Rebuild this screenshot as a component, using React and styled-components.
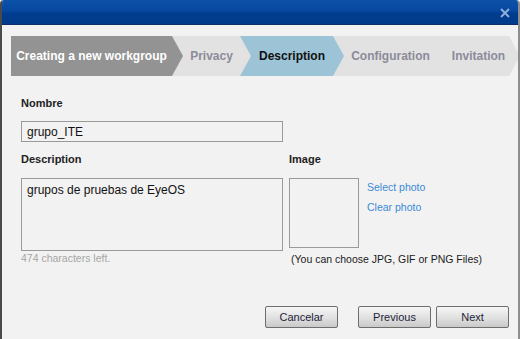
import React from 'react'
import styled, { createGlobalStyle } from 'styled-components'

const GlobalStyle = createGlobalStyle`
  html, body { margin:0; padding:0; background:#fff; }
  body { font-family:"Liberation Sans", Arial, sans-serif; }
  * { box-sizing:border-box; }
`

const steps = [
  { label: 'Creating a new workgroup', state: 'done', width: 161 },
  { label: 'Privacy', state: 'todo', width: 68 },
  { label: 'Description', state: 'active', width: 93 },
  { label: 'Configuration', state: 'todo', width: 104 },
  { label: 'Invitation', state: 'todo' },
]

const stepBg = { done: '#939393', active: '#9dc3d6', todo: '#e2e2e2' }
const stepColor = { done: '#ffffff', active: '#111111', todo: '#8b8b99' }

export default function App() {
  return (
    <>
      <GlobalStyle />
      <Window>
        <TitleBar>
          <Close aria-label="close">
            <svg width="10" height="10" viewBox="0 0 10 10">
              <path d="M1 1 L9 9 M9 1 L1 9" stroke="#8eaede" strokeWidth="2" />
            </svg>
          </Close>
        </TitleBar>
        <Body>
          <StepBar>
            {steps.map((s, i) => (
              <Step key={s.label} $state={s.state} $w={s.width} $first={i === 0}>
                {s.label}
              </Step>
            ))}
          </StepBar>

          <Form>
            <Label>Nombre</Label>
            <TextInput defaultValue="grupo_ITE" />

            <Columns>
              <DescCol>
                <Label>Description</Label>
                <TextArea defaultValue="grupos de pruebas de EyeOS" />
                <Hint>474 characters left.</Hint>
              </DescCol>
              <ImageCol>
                <Label>Image</Label>
                <ImageRow>
                  <ImageBox />
                  <Links>
                    <Link>Select photo</Link>
                    <Link>Clear photo</Link>
                  </Links>
                </ImageRow>
                <Note>(You can choose JPG, GIF or PNG Files)</Note>
              </ImageCol>
            </Columns>
          </Form>

          <Footer>
            <Button>Cancelar</Button>
            <NavButtons>
              <Button>Previous</Button>
              <Button>Next</Button>
            </NavButtons>
          </Footer>
        </Body>
      </Window>
    </>
  )
}

const Window = styled.div`
  width:520px;
  height:339px;
  display:flex;
  flex-direction:column;
  background:#f2f2f2;
  border-left:2px solid #4a4a4a;
  border-right:2px solid #8e8e8e;
  border-radius:4px 4px 0 0;
  overflow:hidden;
`

const TitleBar = styled.div`
  height:25px;
  flex-shrink:0;
  display:flex;
  align-items:center;
  justify-content:flex-end;
  padding-right:8px;
  background:linear-gradient(#0c52a8 0%, #0748a0 45%, #003c8f 55%, #003a8a 100%);
  border-bottom:1px solid #0b2f66;
`

const Close = styled.div`
  display:flex;
  margin-top:2px;
`

const Body = styled.div`
  flex:1;
  display:flex;
  flex-direction:column;
  padding:11px 9px 11px 9px;
`

const StepBar = styled.div`
  display:flex;
  height:40px;
  background:#e2e2e2;
`

const Step = styled.div`
  position:relative;
  ${p => p.$w ? `width:${p.$w}px; flex-shrink:0;` : 'flex:1;'}
  padding-left:${p => p.$first ? 0 : 11}px;
  height:40px;
  line-height:41px;
  text-align:center;
  white-space:nowrap;
  font-size:12px;
  font-weight:bold;
  background:${p => stepBg[p.$state]};
  color:${p => stepColor[p.$state]};

  &::after{
    content:'';
    position:absolute;
    top:0;
    right:-11px;
    z-index:1;
    border-top:20px solid transparent;
    border-bottom:20px solid transparent;
    border-left:11px solid ${p => stepBg[p.$state]};
  }
`

const Form = styled.div`
  padding:21px 0 0 10px;
  display:flex;
  flex-direction:column;
`

const Label = styled.div`
  font-size:11px;
  font-weight:bold;
  line-height:13px;
  color:#222;
`

const TextInput = styled.input`
  margin-top:11px;
  width:262px;
  height:21px;
  border:1px solid #9a9a9a;
  background:#f2f2f2;
  padding:0 5px;
  font-family:"Liberation Sans", Arial, sans-serif;
  font-size:12px;
  color:#111;
  outline:none;
`

const Columns = styled.div`
  display:flex;
  margin-top:11px;
  gap:6px;
`

const DescCol = styled.div`
  display:flex;
  flex-direction:column;
`

const TextArea = styled.textarea`
  margin-top:12px;
  width:262px;
  height:73px;
  border:1px solid #9a9a9a;
  background:#f2f2f2;
  padding:4px 5px;
  resize:none;
  font-family:"Liberation Sans", Arial, sans-serif;
  font-size:12px;
  line-height:14px;
  color:#111;
  outline:none;
`

const Hint = styled.div`
  margin-top:1px;
  font-size:10.5px;
  line-height:12px;
  color:#a6a6a6;
`

const ImageCol = styled.div`
  display:flex;
  flex-direction:column;
`

const ImageRow = styled.div`
  display:flex;
  margin-top:12px;
  gap:8px;
`

const ImageBox = styled.div`
  width:70px;
  height:70px;
  border:1px solid #9a9a9a;
`

const Links = styled.div`
  display:flex;
  flex-direction:column;
  gap:7px;
  padding-top:3px;
`

const Link = styled.span`
  font-size:10.5px;
  line-height:13px;
  color:#3b8ad6;
  cursor:pointer;
`

const Note = styled.div`
  margin:5px 0 0 2px;
  font-size:10.5px;
  line-height:12px;
  color:#1a1a1a;
  white-space:nowrap;
`

const Footer = styled.div`
  margin-top:auto;
  display:flex;
  justify-content:flex-end;
  gap:20px;
`

const NavButtons = styled.div`
  display:flex;
  gap:5px;
`

const Button = styled.button`
  width:73px;
  height:22px;
  padding:0;
  border:1px solid #6e6e6e;
  border-radius:2px;
  background:linear-gradient(#f6f6f6, #e2e2e2 50%, #c9c9c9);
  font-family:"Liberation Sans", Arial, sans-serif;
  font-size:11px;
  color:#1e1e3a;
`
